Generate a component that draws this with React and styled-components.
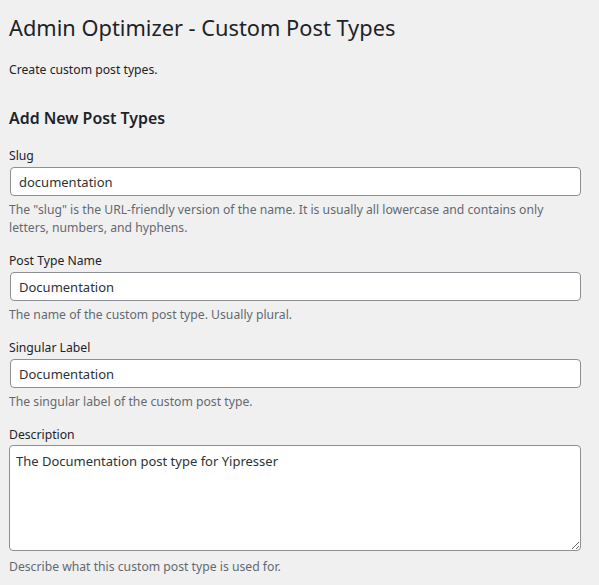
import React from "react";
import styled, { createGlobalStyle } from "styled-components";

const GlobalStyle = createGlobalStyle`
  html, body {
    margin: 0;
    padding: 0;
    background: #f0f0f1;
  }
  body {
    font-family: "Noto Sans", "Open Sans", sans-serif;
    color: #1d2327;
  }
`;

const Wrap = styled.div`
  padding: 10px 18px 20px 9px;
`;

const Title = styled.h1`
  font-size: 21.8px;
  font-weight: 400;
  line-height: 36px;
  margin: 0;
`;

const Intro = styled.p`
  font-size: 12.2px;
  line-height: 18px;
  margin: 15px 0 0;
`;

const SectionTitle = styled.h2`
  font-size: 15.9px;
  font-weight: 600;
  line-height: 22px;
  margin: 28px 0 0;
`;

const Field = styled.div`
  display: flex;
  flex-direction: column;
  margin-top: ${(p) => (p.first ? "18px" : "15px")};
`;

const Label = styled.label`
  font-size: 12.2px;
  line-height: 18px;
`;

const Input = styled.input`
  box-sizing: border-box;
  margin: 2px 0 0 1px;
  height: 29px;
  width: calc(100% - 1px);
  padding: 0 8px;
  font-family: inherit;
  font-size: 13px;
  color: #2c3338;
  background: #fff;
  border: 1px solid #8c8f94;
  border-radius: 4px;
  outline: none;
`;

const TextArea = styled.textarea`
  box-sizing: border-box;
  margin: 1px 0 0;
  height: 106px;
  width: 100%;
  padding: 5px 6px;
  font-family: inherit;
  font-size: 13px;
  line-height: 20px;
  color: #2c3338;
  background: #fff;
  border: 1px solid #8c8f94;
  border-radius: 4px;
  resize: both;
  outline: none;
`;

const Help = styled.p`
  font-size: 12.2px;
  line-height: 18px;
  color: #646970;
  margin: ${(p) => (p.wide ? "7px" : "5px")} 0 0;
`;

const fields = [
  {
    label: "Slug",
    value: "documentation",
    help: 'The "slug" is the URL-friendly version of the name. It is usually all lowercase and contains only letters, numbers, and hyphens.',
  },
  {
    label: "Post Type Name",
    value: "Documentation",
    help: "The name of the custom post type. Usually plural.",
  },
  {
    label: "Singular Label",
    value: "Documentation",
    help: "The singular label of the custom post type.",
  },
];

export default function App() {
  return (
    <>
      <GlobalStyle />
      <Wrap>
        <Title>Admin Optimizer - Custom Post Types</Title>
        <Intro>Create custom post types.</Intro>
        <SectionTitle>Add New Post Types</SectionTitle>
        {fields.map((f, i) => (
          <Field key={f.label} first={i === 0}>
            <Label>{f.label}</Label>
            <Input defaultValue={f.value} />
            <Help>{f.help}</Help>
          </Field>
        ))}
        <Field>
          <Label>Description</Label>
          <TextArea defaultValue="The Documentation post type for Yipresser" />
          <Help wide>Describe what this custom post type is used for.</Help>
        </Field>
      </Wrap>
    </>
  );
}
